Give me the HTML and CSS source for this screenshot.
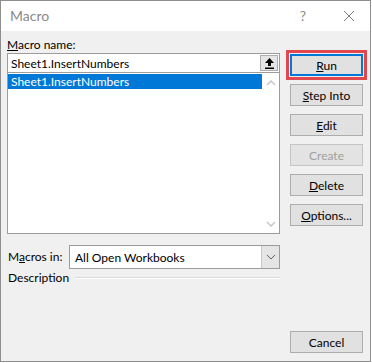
FILE: index.html
```html
<!DOCTYPE html>
<html lang="en">
<head>
  <meta charset="UTF-8">
  <title>Macro</title>
  <link rel="stylesheet" href="styles.css">
</head>
<body>
  <div class="window">
    <div class="titlebar">
      <span class="title">Macro</span>
      <span class="help">?</span>
      <svg class="close" width="12" height="12" viewBox="0 0 12 12">
        <path d="M1 1 L11 11 M11 1 L1 11" stroke="#7a7a7a" stroke-width="1" fill="none"/>
      </svg>
    </div>

    <div class="content">
      <div class="left">
        <div class="label"><u>M</u>acro name:</div>

        <div class="namebox">
          <span class="nametext">Sheet1.InsertNumbers</span>
          <span class="pick">
            <svg width="11" height="11" viewBox="0 0 11 11">
              <path d="M5.5 0 L10 5 L7 5 L7 8 L4 8 L4 5 L1 5 Z" fill="#000"/>
              <rect x="1" y="9.5" width="9" height="1.5" fill="#000"/>
            </svg>
          </span>
        </div>

        <div class="list">
          <div class="items">
            <div class="item selected">Sheet1.InsertNumbers</div>
          </div>
          <div class="scroll">
            <svg width="10" height="6" viewBox="0 0 10 6">
              <path d="M1 5 L5 1 L9 5" stroke="#c6c6c6" stroke-width="1.5" fill="none"/>
            </svg>
            <svg width="10" height="6" viewBox="0 0 10 6">
              <path d="M1 1 L5 5 L9 1" stroke="#c6c6c6" stroke-width="1.5" fill="none"/>
            </svg>
          </div>
        </div>

        <div class="macros-in">
          <span class="label">M<u>a</u>cros in:</span>
          <div class="combo">
            <span class="combotext">All Open Workbooks</span>
            <span class="drop">
              <svg width="10" height="6" viewBox="0 0 10 6">
                <path d="M1 1 L5 5 L9 1" stroke="#606060" stroke-width="1" fill="none"/>
              </svg>
            </span>
          </div>
        </div>

        <div class="desc">
          <span class="label">Description</span>
          <span class="rule"></span>
        </div>
      </div>

      <div class="right">
        <button type="button" class="btn default"><u>R</u>un</button>
        <button type="button" class="btn"><u>S</u>tep Into</button>
        <button type="button" class="btn"><u>E</u>dit</button>
        <button type="button" class="btn" disabled>Create</button>
        <button type="button" class="btn"><u>D</u>elete</button>
        <button type="button" class="btn"><u>O</u>ptions...</button>
        <button type="button" class="btn cancel">Cancel</button>
      </div>
    </div>
  </div>
</body>
</html>
```

FILE: styles.css
```css
body {
  margin: 0;
  background: #fff;
  font-family: "Segoe UI", Lato, "Noto Sans", Arial, sans-serif;
  font-size: 12px;
  color: #000;
}

.window {
  width: 371px;
  height: 362px;
  border: 1px solid #8e8e8e;
  box-sizing: border-box;
  display: flex;
  flex-direction: column;
  background: #f0f0f0;
}

.titlebar {
  height: 30px;
  background: #fff;
  display: flex;
  align-items: center;
  padding-left: 9px;
  flex-shrink: 0;
}

.title {
  font-size: 14px;
  color: #8a8a8a;
  flex: 1;
  margin-top: -2px;
}

.help {
  font-size: 14px;
  color: #8a8a8a;
  margin-right: 37px;
  margin-top: -2px;
}

.close {
  margin-right: 15px;
}

.content {
  flex: 1;
  display: flex;
  gap: 10px;
  padding-left: 6px;
}

/* 左の列 */
.left {
  width: 273px;
  display: flex;
  flex-direction: column;
}

.label {
  line-height: 16px;
}

.left > .label {
  margin-top: 6px;
}

.namebox {
  height: 20px;
  border: 1px solid #9c9c9c;
  background: #fff;
  box-sizing: border-box;
  display: flex;
  align-items: center;
}

.nametext {
  flex: 1;
  padding-left: 3px;
}

.pick {
  width: 18px;
  height: 16px;
  margin-right: 1px;
  background: #e5e5e5;
  border: 1px solid #adadad;
  box-sizing: border-box;
  display: flex;
  align-items: center;
  justify-content: center;
}

.list {
  height: 161px;
  border: 1px solid #9c9c9c;
  border-top: none;
  background: #fff;
  box-sizing: border-box;
  display: flex;
}

.items {
  flex: 1;
  padding-top: 1px;
}

.item {
  height: 15px;
  line-height: 15px;
  padding-left: 3px;
}

.item.selected {
  background: #0078d7;
  color: #fff;
}

.scroll {
  width: 17px;
  display: flex;
  flex-direction: column;
  justify-content: space-between;
  align-items: center;
  padding: 7px 0 6px;
}

.macros-in {
  margin-top: 11px;
  display: flex;
  align-items: center;
}

.macros-in .label {
  width: 61px;
  padding-left: 1px;
}

.combo {
  flex: 1;
  height: 24px;
  border: 1px solid #9c9c9c;
  background: #fff;
  box-sizing: border-box;
  display: flex;
  align-items: center;
}

.combotext {
  flex: 1;
  padding-left: 5px;
}

.drop {
  width: 17px;
  height: 22px;
  background: #e5e5e5;
  border-left: 1px solid #c8c8c8;
  display: flex;
  align-items: center;
  justify-content: center;
}

.desc {
  display: flex;
  align-items: center;
  margin-top: 1px;
}

.desc .label {
  padding-left: 1px;
  margin-right: 6px;
}

.desc .rule {
  flex: 1;
  border-top: 1px solid #dadada;
  border-bottom: 1px solid #fff;
}

/* 右のボタン */
.right {
  width: 73px;
  display: flex;
  flex-direction: column;
  gap: 8px;
  padding-top: 23px;
  padding-bottom: 8px;
}

.btn {
  height: 22px;
  width: 100%;
  padding: 0;
  background: #e1e1e1;
  border: 1px solid #adadad;
  font-family: inherit;
  font-size: 12px;
  color: #000;
  box-sizing: border-box;
}

.btn.default {
  border: 2px solid #0078d7;
  outline: 3px solid #e0484d;
  outline-offset: 1px;
}

.btn:disabled {
  color: #a0a0a0;
  border-color: #c4c4c4;
  background: #e3e3e3;
}

.btn.cancel {
  margin-top: auto;
}
```
